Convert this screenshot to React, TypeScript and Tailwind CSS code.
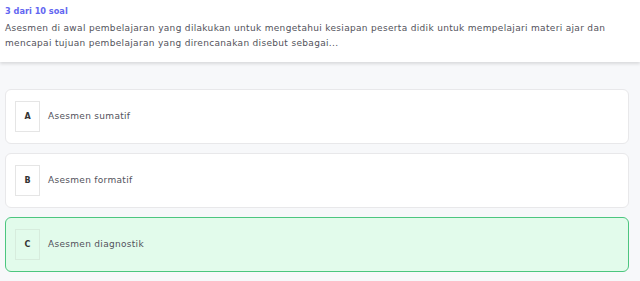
const options = [
  { key: "A", label: "Asesmen sumatif", selected: false },
  { key: "B", label: "Asesmen formatif", selected: false },
  { key: "C", label: "Asesmen diagnostik", selected: true },
];

export default function App() {
  return (
    <div
      className="min-h-[281px] w-[640px] bg-[#f7f8fa]"
      style={{ fontFamily: '"DejaVu Sans", "Noto Sans", sans-serif' }}
    >
      <div className="bg-white px-[5px] pt-[5px] pb-[11px] shadow-[0_2px_3px_rgba(0,0,0,0.12)]">
        <div className="text-[8.2px] font-semibold leading-[12px] text-[#6366f1]">3 dari 10 soal</div>
        <p className="mt-[4px] text-[9px] leading-[15px] tracking-[0.32px] text-[#52525b]">
          Asesmen di awal pembelajaran yang dilakukan untuk mengetahui kesiapan peserta didik untuk mempelajari materi ajar dan
          mencapai tujuan pembelajaran yang direncanakan disebut sebagai...
        </p>
      </div>

      <div className="flex flex-col gap-[9px] pl-[5px] pr-[11px] pt-[27px]">
        {options.map((o) => (
          <div
            key={o.key}
            className={
              o.selected
                ? "flex h-[55px] items-center gap-[8px] rounded-[6px] border border-[#4cc67f] bg-[#e2fbeb] pl-[9px]"
                : "flex h-[55px] items-center gap-[8px] rounded-[6px] border border-[#e8e8ea] bg-white pl-[9px]"
            }
          >
            <div
              className={
                o.selected
                  ? "flex h-[31px] w-[25px] items-center justify-center border border-[#d7ecdd] text-[8px] font-bold text-[#333]"
                  : "flex h-[31px] w-[25px] items-center justify-center border border-[#e5e5e5] bg-white text-[8px] font-bold text-[#333]"
              }
            >
              {o.key}
            </div>
            <span className="text-[9px] tracking-[0.3px] text-[#52525b]">{o.label}</span>
          </div>
        ))}
      </div>
    </div>
  );
}
